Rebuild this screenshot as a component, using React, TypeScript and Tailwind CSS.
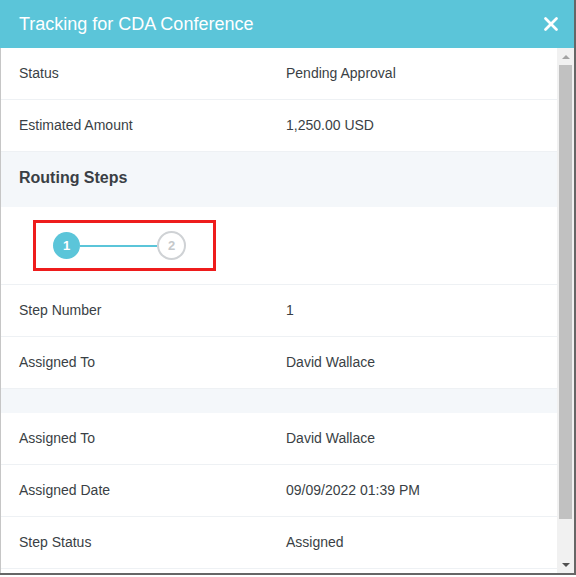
import { X } from 'lucide-react';

type Row = { label: string; value: string };

const topRows: Row[] = [
  { label: 'Status', value: 'Pending Approval' },
  { label: 'Estimated Amount', value: '1,250.00 USD' },
];

const stepRows: Row[] = [
  { label: 'Step Number', value: '1' },
  { label: 'Assigned To', value: 'David Wallace' },
];

const detailRows: Row[] = [
  { label: 'Assigned To', value: 'David Wallace' },
  { label: 'Assigned Date', value: '09/09/2022 01:39 PM' },
  { label: 'Step Status', value: 'Assigned' },
];

function InfoRow({ label, value }: Row) {
  return (
    <div className="flex h-[52px] shrink-0 items-center border-b border-[#eef1f4] px-[18px] text-[14px] text-[#3a3f45]">
      <div className="w-[267px]">{label}</div>
      <div>{value}</div>
    </div>
  );
}

function Stepper() {
  return (
    <div className="flex h-[78px] shrink-0 items-center border-b border-[#eef1f4] pl-[32px]">
      <div className="flex h-[51px] w-[183px] items-center border-[3px] border-[#ee1c1c] pl-[17px]">
        <div className="flex h-[27px] w-[27px] items-center justify-center rounded-full bg-[#5bc5d9] text-[13px] font-bold text-white">
          1
        </div>
        <div className="h-[2px] w-[77px] bg-[#5bc5d9]" />
        <div className="flex h-[29px] w-[29px] items-center justify-center rounded-full border-2 border-[#cfd2d5] text-[13px] font-bold text-[#c5c8cb]">
          2
        </div>
      </div>
    </div>
  );
}

function ScrollBar() {
  return (
    <div className="flex w-[17px] shrink-0 flex-col items-center bg-[#f1f1f1]">
      <div className="flex h-[17px] w-full items-center justify-center">
        <div className="h-0 w-0 border-x-[4px] border-b-[4px] border-x-transparent border-b-[#a3a3a3]" />
      </div>
      <div className="h-[454px] w-[13px] bg-[#c1c1c1]" />
      <div className="flex-1" />
      <div className="flex h-[17px] w-full items-center justify-center">
        <div className="h-0 w-0 border-x-[4px] border-t-[4px] border-x-transparent border-t-[#505050]" />
      </div>
    </div>
  );
}

export default function App() {
  return (
    <div className="h-[577px] w-[576px] bg-white font-['Liberation_Sans',Arial,sans-serif]">
      <div className="flex h-[575px] w-[576px] flex-col border-r-2 border-b-2 border-[#666]">
        <header className="flex h-[48px] shrink-0 items-center justify-between bg-[#5bc5d9] pl-[19px] pr-[12px] text-white">
          <h1 className="text-[18px]">Tracking for CDA Conference</h1>
          <X size={22} strokeWidth={3} />
        </header>
        <div className="flex min-h-0 flex-1 border-l border-[#c6c6c6]">
          <div className="flex min-w-0 flex-1 flex-col overflow-hidden">
            {topRows.map((r) => (
              <InfoRow key={r.label} {...r} />
            ))}
            <div className="flex h-[55px] shrink-0 items-center bg-[#f4f7fa] px-[18px] pb-[3px] text-[16px] font-bold text-[#3a3f45]">
              Routing Steps
            </div>
            <Stepper />
            {stepRows.map((r) => (
              <InfoRow key={r.label} {...r} />
            ))}
            <div className="h-[24px] shrink-0 bg-[#f4f7fa]" />
            {detailRows.map((r) => (
              <InfoRow key={r.label} {...r} />
            ))}
          </div>
          <ScrollBar />
        </div>
      </div>
    </div>
  );
}
